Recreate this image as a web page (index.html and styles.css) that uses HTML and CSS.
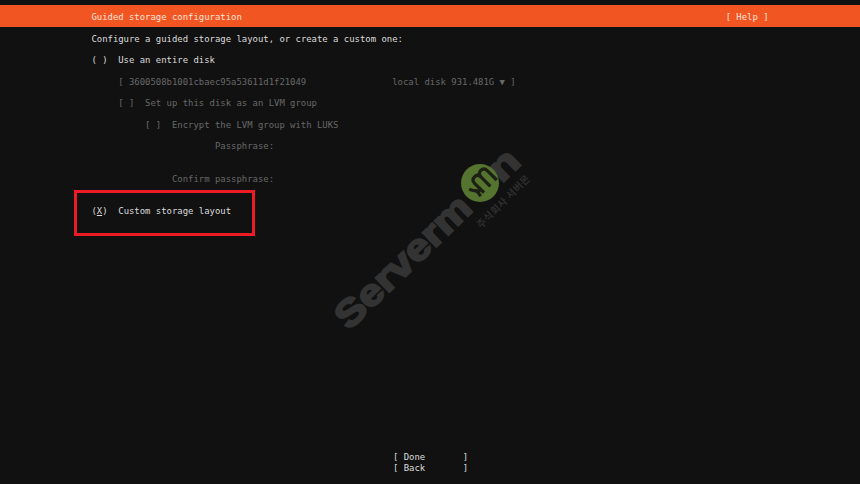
FILE: index.html
```html
<!DOCTYPE html>
<html lang="en">
<head>
<meta charset="utf-8">
<title>Guided storage configuration</title>
<link rel="stylesheet" href="styles.css">
</head>
<body>
<div class="screen">
  <header class="bar">
    <span class="row">Guided storage configuration</span>
    <span class="row">[ Help ]</span>
  </header>
  <main class="form">
    <div class="row">Configure a guided storage layout, or create a custom one:</div>
    <div class="row gap-1">( )  Use an entire disk</div>
    <div class="row gap-1 dim indent-5">[ 3600508b1001cbaec95a53611d1f21049                local disk 931.481G ▼ ]</div>
    <div class="row gap-1 dim indent-5">[ ]  Set up this disk as an LVM group</div>
    <div class="row gap-1 dim indent-10">[ ]  Encrypt the LVM group with LUKS</div>
    <div class="row gap-1 dim indent-23">Passphrase:</div>
    <div class="row gap-2 dim indent-15">Confirm passphrase:</div>
    <div class="row gap-2">(<u>X</u>)  Custom storage layout</div>
  </main>
  <footer class="actions">
    <div class="row">[ Done       ]</div>
    <div class="row">[ Back       ]</div>
  </footer>
  <div class="highlight"></div>
  <svg class="watermark" viewBox="0 0 860 484" width="860" height="484" aria-hidden="true">
    <g transform="translate(349 331) rotate(-44)">
      <text class="wm-name" x="0" y="0" textLength="174" lengthAdjust="spacingAndGlyphs">Serverm</text>
      <text class="wm-name" x="212" y="0" textLength="29" lengthAdjust="spacingAndGlyphs">n</text>
    </g>
    <circle class="wm-disc" cx="480" cy="183" r="19"/>
    <g transform="translate(484 180) rotate(-45)">
      <path class="wm-glyph" d="M-9 9V-4Q-9-9-4.500-9T0-4V9M0-4Q0-9 4.500-9T9-4V9M-9 5Q-14 3-17-4M-14 1Q-12 4-14 9"/>
    </g>
    <text class="wm-sub" transform="translate(481 229) rotate(-45)" textLength="70">주식회사 서버몬</text>
  </svg>
</div>
</body>
</html>
```
FILE: styles.css
```css
html, body {
  margin: 0;
  padding: 0;
  background: #111111;
}

.screen {
  position: relative;
  width: 860px;
  height: 484px;
  overflow: hidden;
  display: flex;
  flex-direction: column;
  background: #111111;
  color: #dcdcdc;
  font-family: "DejaVu Sans Mono", "Liberation Mono", monospace;
  font-size: 8.93px;
  line-height: 10.75px;
}

.bar {
  display: flex;
  justify-content: space-between;
  height: 21.5px;
  margin-top: 5.4px;
  padding: 6.6px 91.4px 0;
  box-sizing: border-box;
  background: #f15622;
  color: #ffe4d8;
}

.form {
  display: flex;
  flex-direction: column;
  padding: 7.1px 0 0 91.4px;
}

.row {
  height: 10.75px;
  white-space: pre;
}

.gap-1 { margin-top: 10.75px; }
.gap-2 { margin-top: 21.5px; }
.indent-5 { margin-left: 5ch; }
.indent-10 { margin-left: 10ch; }
.indent-15 { margin-left: 15ch; }
.indent-23 { margin-left: 23ch; }
.dim { color: #686868; }

.actions {
  margin-top: auto;
  margin-bottom: 10.25px;
  align-self: flex-start;
  margin-left: 392.9px;
}

.highlight {
  position: absolute;
  left: 74px;
  top: 190px;
  width: 181px;
  height: 46px;
  box-sizing: border-box;
  border: 3.5px solid #ed1c24;
}

.watermark {
  position: absolute;
  left: 0;
  top: 0;
  pointer-events: none;
}

.wm-name {
  font-family: "Liberation Sans", Arial, sans-serif;
  font-weight: 700;
  font-size: 37px;
  fill: #333333;
  stroke: #333333;
  stroke-width: 2px;
}

.wm-disc { fill: #55742f; }

.wm-glyph {
  fill: none;
  stroke: #1b1f14;
  stroke-width: 3.2px;
}

.wm-sub {
  font-family: "Noto Sans CJK KR", "Noto Sans", sans-serif;
  font-weight: 700;
  font-size: 10px;
  fill: #2e2e2e;
}
```
